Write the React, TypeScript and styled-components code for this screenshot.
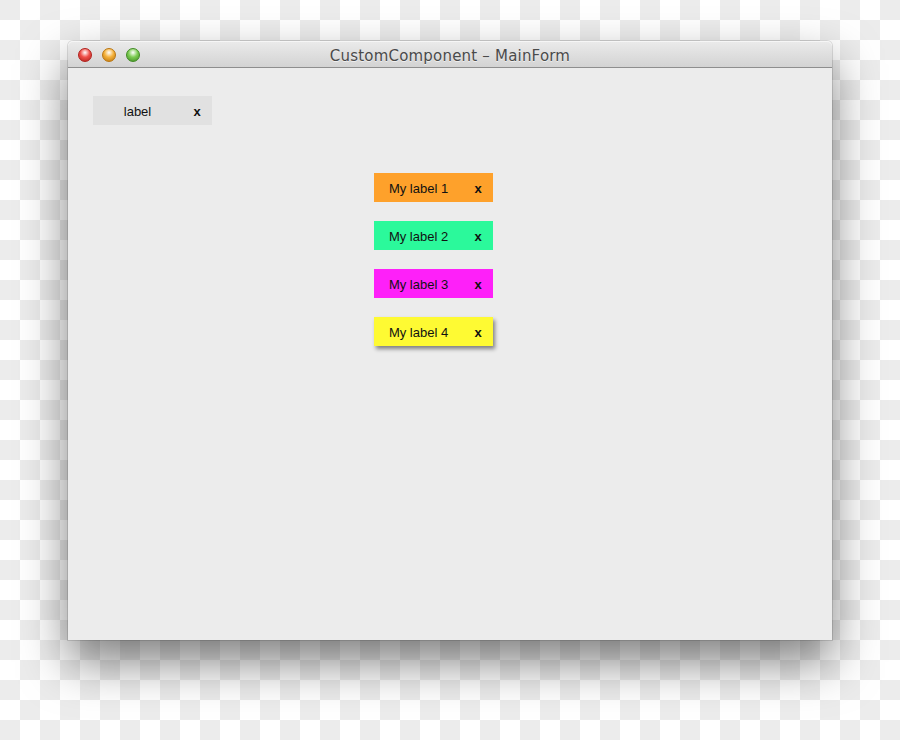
import React from 'react'
import styled, { createGlobalStyle } from 'styled-components'

const GlobalStyle = createGlobalStyle`
  html, body {
    margin: 0;
    padding: 0;
  }
  body {
    width: 900px;
    height: 740px;
    overflow: hidden;
    font-family: 'Liberation Sans', Arial, sans-serif;
    background-color: #ffffff;
    background-image:
      linear-gradient(45deg, #ececec 25%, transparent 25%, transparent 75%, #ececec 75%),
      linear-gradient(45deg, #ececec 25%, transparent 25%, transparent 75%, #ececec 75%);
    background-size: 40px 40px;
    background-position: 20px 0, 0 20px;
  }
`

const chipColors: Record<string, string> = {
  plain: '#e1e1e1',
  orange: '#fea12b',
  green: '#2bf99b',
  magenta: '#fe20f9',
  yellow: '#fefa33',
}

const Desktop = styled.div`
  padding: 41px 0 0 68px;
`

const Window = styled.div`
  width: 764px;
  height: 599px;
  display: flex;
  flex-direction: column;
  border-radius: 5px 5px 0 0;
  background: #ececec;
  box-shadow: 0 22px 48px rgba(0, 0, 0, 0.5), 0 0 0 1px rgba(0, 0, 0, 0.12);
`

const TitleBar = styled.div`
  position: relative;
  height: 27px;
  box-sizing: border-box;
  padding-top: 3px;
  flex: none;
  display: flex;
  align-items: center;
  justify-content: center;
  border-radius: 5px 5px 0 0;
  border-bottom: 1px solid #8e8e8e;
  background: linear-gradient(#ebebeb, #d3d3d3);
  box-shadow: inset 0 1px 0 #f6f6f6;
`

const Lights = styled.div`
  position: absolute;
  left: 10px;
  top: 7px;
  display: flex;
  gap: 10px;
`

const Light = styled.span<{ $c: string; $d: string }>`
  width: 14px;
  height: 14px;
  border-radius: 50%;
  box-sizing: border-box;
  border: 1px solid ${(p) => p.$d};
  background: radial-gradient(circle at 50% 30%, #ffffff 0, ${(p) => p.$c} 45%, ${(p) => p.$d} 100%);
`

const Title = styled.div`
  font-family: 'DejaVu Sans', sans-serif;
  font-size: 15px;
  letter-spacing: 0.2px;
  color: #4a4a4a;
  text-shadow: 0 1px 0 rgba(255, 255, 255, 0.6);
`

const Content = styled.div`
  flex: 1;
  padding: 28px 25px;
`

const Stack = styled.div`
  display: flex;
  flex-direction: column;
  gap: 19px;
  margin: 48px 0 0 281px;
`

const Chip = styled.div<{ $tone: string; $raised?: boolean }>`
  width: 119px;
  height: 29px;
  padding-top: 1px;
  box-sizing: border-box;
  display: grid;
  grid-template-columns: 89px 30px;
  align-items: center;
  justify-items: center;
  font-size: 13px;
  color: #111;
  background: ${(p) => chipColors[p.$tone]};
  box-shadow: ${(p) => (p.$raised ? '2px 3px 4px rgba(0, 0, 0, 0.45)' : 'none')};
`

const Close = styled.span`
  font-size: 13px;
  font-weight: bold;
`

const items = [
  { text: 'My label 1', tone: 'orange' },
  { text: 'My label 2', tone: 'green' },
  { text: 'My label 3', tone: 'magenta' },
  { text: 'My label 4', tone: 'yellow', raised: true },
]

export default function App() {
  return (
    <>
      <GlobalStyle />
      <Desktop>
        <Window>
          <TitleBar>
            <Lights>
              <Light $c="#f0504a" $d="#b0201c" />
              <Light $c="#f5b13a" $d="#b9740f" />
              <Light $c="#7ccc52" $d="#3f8a22" />
            </Lights>
            <Title>CustomComponent – MainForm</Title>
          </TitleBar>
          <Content>
            <Chip $tone="plain">
              <span>label</span>
              <Close>x</Close>
            </Chip>
            <Stack>
              {items.map((item) => (
                <Chip key={item.text} $tone={item.tone} $raised={item.raised}>
                  <span>{item.text}</span>
                  <Close>x</Close>
                </Chip>
              ))}
            </Stack>
          </Content>
        </Window>
      </Desktop>
    </>
  )
}
